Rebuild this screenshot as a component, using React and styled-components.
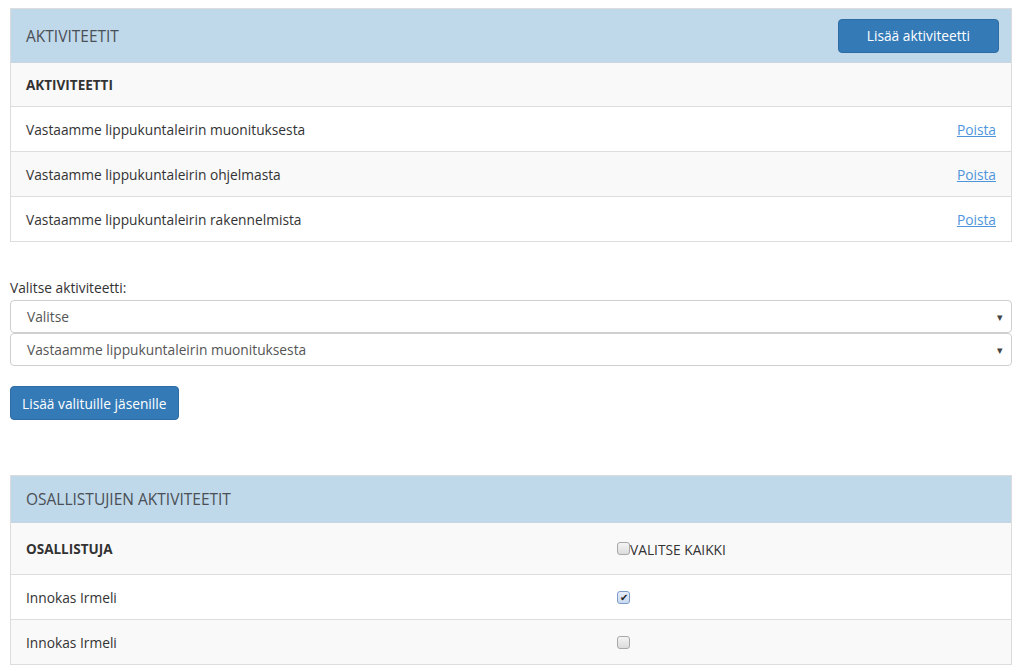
import styled, { createGlobalStyle } from 'styled-components';

const GlobalStyle = createGlobalStyle`
  body {
    margin: 0;
    background: #fff;
    font-family: "Open Sans", "Liberation Sans", sans-serif;
    font-size: 13.75px;
    color: #333;
  }
`;

const activities = [
  'Vastaamme lippukuntaleirin muonituksesta',
  'Vastaamme lippukuntaleirin ohjelmasta',
  'Vastaamme lippukuntaleirin rakennelmista',
];

const participants = [
  { name: 'Innokas Irmeli', checked: true },
  { name: 'Innokas Irmeli', checked: false },
];

const App = () => {
  return (
    <Page>
      <GlobalStyle />
      <Panel>
        <Heading tall>
          <Title>AKTIVITEETIT</Title>
          <Button>Lisää aktiviteetti</Button>
        </Heading>
        <Table>
          <HeadRow>
            <Cell bold>AKTIVITEETTI</Cell>
            <Cell />
          </HeadRow>
          {activities.map((a, i) => (
            <Row key={a} striped={i % 2 === 1}>
              <Cell>{a}</Cell>
              <Cell right><Link>Poista</Link></Cell>
            </Row>
          ))}
        </Table>
      </Panel>

      <Form>
        <Label>Valitse aktiviteetti:</Label>
        <Select>Valitse<Arrow>▾</Arrow></Select>
        <Select>Vastaamme lippukuntaleirin muonituksesta<Arrow>▾</Arrow></Select>
        <SmallButton>Lisää valituille jäsenille</SmallButton>
      </Form>

      <Panel>
        <Heading>
          <Title>OSALLISTUJIEN AKTIVITEETIT</Title>
        </Heading>
        <Table>
          <HeadRow tall>
            <Cell bold>OSALLISTUJA</Cell>
            <CheckCell>
              <Box />
              <CheckLabel>VALITSE KAIKKI</CheckLabel>
            </CheckCell>
          </HeadRow>
          {participants.map((p, i) => (
            <Row key={i} striped={i % 2 === 1}>
              <Cell>{p.name}</Cell>
              <CheckCell>
                <Box checked={p.checked}>{p.checked && <Tick>✔</Tick>}</Box>
              </CheckCell>
            </Row>
          ))}
        </Table>
      </Panel>
    </Page>
  );
};

const Page = styled.div`
  padding: 8px 12px 0 10px;
`;

const Panel = styled.div`
  border: 1px solid #dcdcdc;
  border-bottom: none;
`;

const Heading = styled.div`
  height: ${(p) => (p.tall ? '53px' : '46px')};
  background: #bfd8ea;
  display: flex;
  align-items: center;
  justify-content: space-between;
  padding: 0 12px 0 15px;
  border-bottom: 1px solid #c9d6df;
`;

const Title = styled.div`
  font-size: 15.5px;
  color: #4a4f55;
`;

const Button = styled.button`
  height: 34px;
  padding: 0 28px;
  background: #337ab7;
  border: 1px solid #2e6da4;
  border-radius: 4px;
  color: #fff;
  font-family: inherit;
  font-size: 13.75px;
`;

const Table = styled.div`
  display: flex;
  flex-direction: column;
`;

const Row = styled.div`
  display: grid;
  grid-template-columns: 598px 1fr;
  height: 44px;
  align-items: center;
  background: ${(p) => (p.striped ? '#f9f9f9' : '#fff')};
  border-bottom: 1px solid #dddddd;
`;

const HeadRow = styled(Row)`
  background: #f9f9f9;
  height: ${(p) => (p.tall ? '51px' : '43px')};
  border-bottom: 1px solid #dddddd;
`;

const Cell = styled.div`
  padding: 0 15px;
  font-weight: ${(p) => (p.bold ? 700 : 400)};
  font-size: ${(p) => (p.bold ? '13.5px' : '13.75px')};
  text-align: ${(p) => (p.right ? 'right' : 'left')};
`;

const Link = styled.a`
  color: #4f95dc;
  text-decoration: underline;
  cursor: pointer;
`;

const CheckCell = styled.div`
  padding-left: 8px;
  display: flex;
  align-items: center;
`;

const Box = styled.span`
  width: 13px;
  height: 13px;
  border: 1px solid ${(p) => (p.checked ? '#7a9cc6' : '#a8a8a8')};
  border-radius: 3px;
  background: ${(p) => (p.checked ? 'linear-gradient(#e6eefa, #c9d9f0)' : 'linear-gradient(#f4f4f4, #dcdcdc)')};
  display: inline-flex;
  align-items: center;
  justify-content: center;
  box-sizing: border-box;
`;

const Tick = styled.span`
  font-size: 10px;
  line-height: 1;
  color: #222;
`;

const CheckLabel = styled.span`
  font-size: 13.75px;
  margin-top: 1px;
`;

const Form = styled.div`
  padding: 36px 0 55px;
  display: flex;
  flex-direction: column;
  align-items: flex-start;
`;

const Label = styled.div`
  line-height: 20px;
  margin-bottom: 2px;
`;

const Select = styled.div`
  align-self: stretch;
  height: 33px;
  box-sizing: border-box;
  border: 1px solid #cfcfcf;
  border-radius: 4px;
  padding: 0 8px 0 16px;
  display: flex;
  align-items: center;
  justify-content: space-between;
  color: #555;
  background: #fff;
`;

const Arrow = styled.span`
  font-size: 11px;
  color: #444;
`;

const SmallButton = styled(Button)`
  margin-top: 20px;
  height: 34px;
  padding: 0 11px;
`;

export default App;
